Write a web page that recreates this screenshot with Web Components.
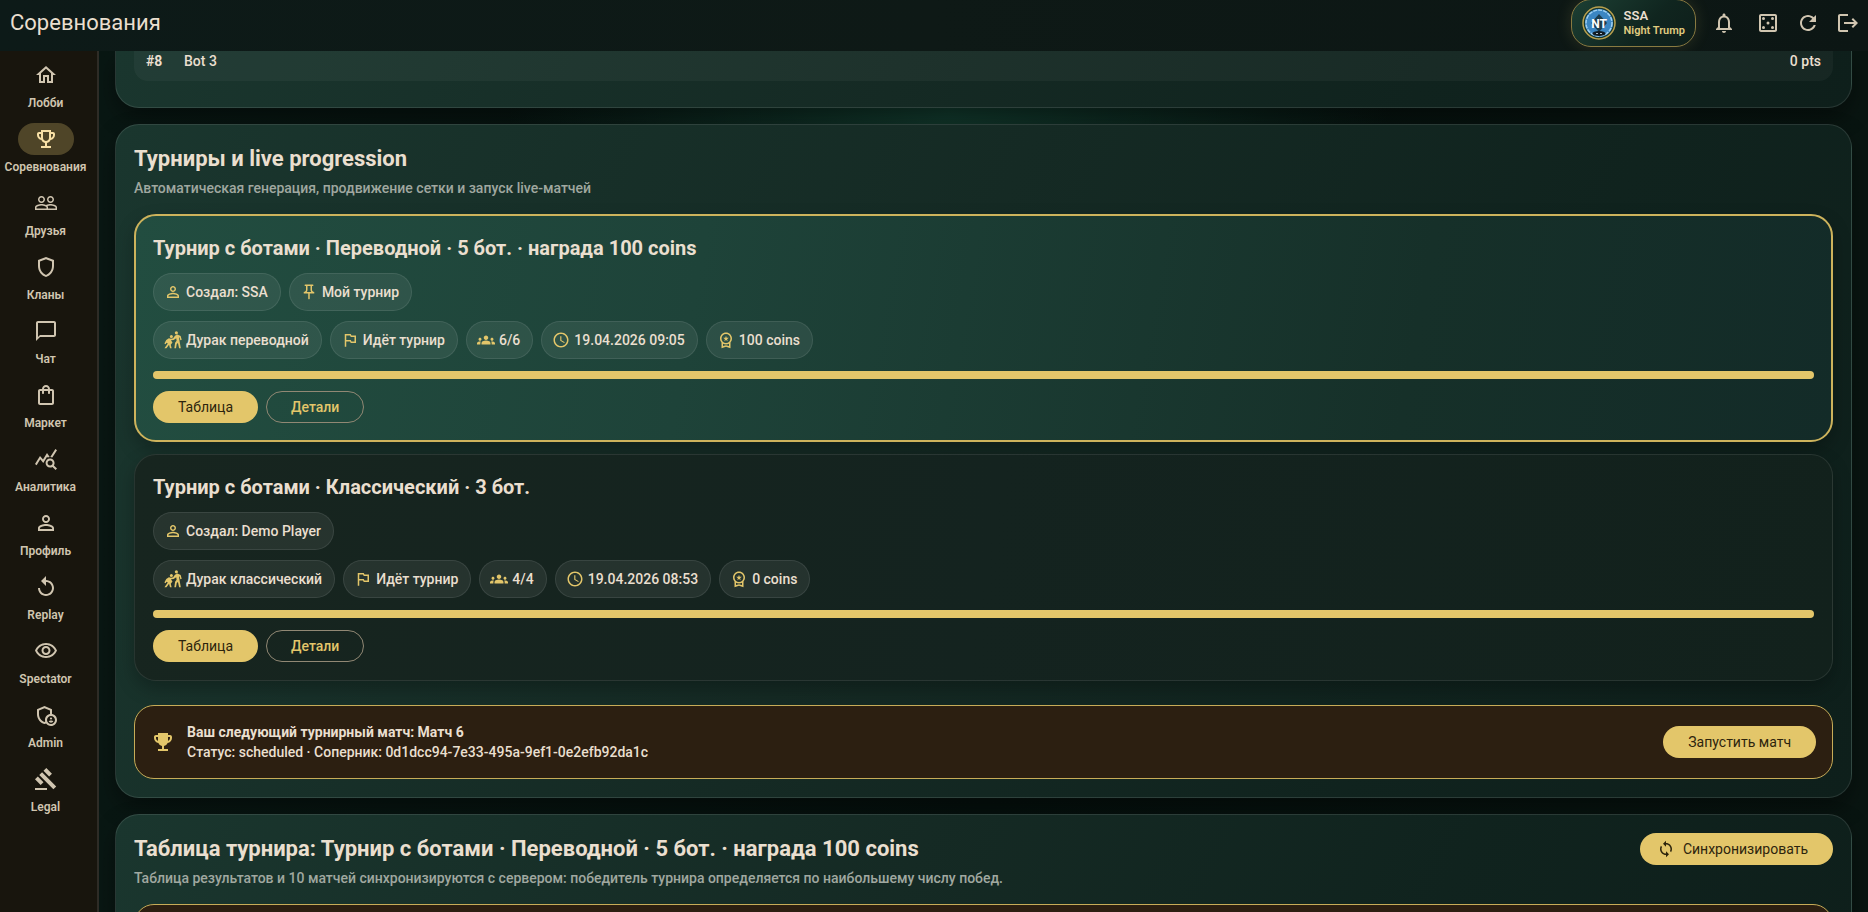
<!DOCTYPE html>
<html lang="ru">
<head>
<meta charset="utf-8">
<title>Соревнования</title>
<style>
	:root {
		--gold: #e3c66a;
		--cream: #eadfcf;
		--line: rgba(255, 255, 255, 0.11);
	}
	body {
		margin: 0;
		background: #07120f;
		color: var(--cream);
		font: 400 14px/20px Roboto, "Liberation Sans", sans-serif;
	}
</style>
</head>
<body>
<app-shell>
	<top-bar slot="bar" heading="Соревнования">
		<user-badge initials="NT" name="SSA" rank="Night Trump"></user-badge>
	</top-bar>
	<side-nav slot="nav">
		<nav-item icon="home">Лобби</nav-item>
		<nav-item icon="trophy" active>Соревнования</nav-item>
		<nav-item icon="people">Друзья</nav-item>
		<nav-item icon="shield">Кланы</nav-item>
		<nav-item icon="chat">Чат</nav-item>
		<nav-item icon="bag">Маркет</nav-item>
		<nav-item icon="stats">Аналитика</nav-item>
		<nav-item icon="person">Профиль</nav-item>
		<nav-item icon="replay">Replay</nav-item>
		<nav-item icon="eye">Spectator</nav-item>
		<nav-item icon="admin">Admin</nav-item>
		<nav-item icon="gavel">Legal</nav-item>
	</side-nav>

	<app-panel continued>
		<rank-row place="#8" player="Bot 3" points="0 pts"></rank-row>
	</app-panel>

	<app-panel heading="Турниры и live progression" note="Автоматическая генерация, продвижение сетки и запуск live-матчей">
		<tournament-card heading="Турнир с ботами · Переводной · 5 бот. · награда 100 coins" mine>
			<info-chip slot="owner" icon="person">Создал: SSA</info-chip>
			<info-chip slot="owner" icon="pin">Мой турнир</info-chip>
			<info-chip icon="kabaddi">Дурак переводной</info-chip>
			<info-chip icon="flag">Идёт турнир</info-chip>
			<info-chip icon="groups">6/6</info-chip>
			<info-chip icon="clock">19.04.2026 09:05</info-chip>
			<info-chip icon="award">100 coins</info-chip>
		</tournament-card>
		<tournament-card heading="Турнир с ботами · Классический · 3 бот.">
			<info-chip slot="owner" icon="person">Создал: Demo Player</info-chip>
			<info-chip icon="kabaddi">Дурак классический</info-chip>
			<info-chip icon="flag">Идёт турнир</info-chip>
			<info-chip icon="groups">4/4</info-chip>
			<info-chip icon="clock">19.04.2026 08:53</info-chip>
			<info-chip icon="award">0 coins</info-chip>
		</tournament-card>
		<match-banner spaced>
			<strong>Ваш следующий турнирный матч: Матч 6</strong>
			<span>Статус: scheduled · Соперник: 0d1dcc94-7e33-495a-9ef1-0e2efb92da1c</span>
			<pill-button slot="action">Запустить матч</pill-button>
		</match-banner>
	</app-panel>

	<app-panel heading="Таблица турнира: Турнир с ботами · Переводной · 5 бот. · награда 100 coins" note="Таблица результатов и 10 матчей синхронизируются с сервером: победитель турнира определяется по наибольшему числу побед.">
		<pill-button slot="action" icon="sync">Синхронизировать</pill-button>
		<match-banner bare></match-banner>
	</app-panel>
</app-shell>

<script>
// 24x24 icons
const ICONS = {
	home: '<path d="M12 5.69l5 4.5V18h-2v-6H9v6H7v-7.81l5-4.5M12 3L2 12h3v8h6v-6h2v6h6v-8h3L12 3z"/>',
	trophy: '<path d="M19 5h-2V3H7v2H5c-1.1 0-2 .9-2 2v1c0 2.55 1.92 4.63 4.39 4.94.63 1.5 1.98 2.63 3.61 2.96V19H7v2h10v-2h-4v-3.1c1.63-.33 2.98-1.46 3.61-2.96C19.08 12.63 21 10.55 21 8V7c0-1.1-.9-2-2-2zM5 8V7h2v3.82C5.84 10.4 5 9.3 5 8zm7 6c-1.65 0-3-1.35-3-3V5h6v6c0 1.65-1.35 3-3 3zm7-6c0 1.3-.84 2.4-2 2.82V7h2v1z"/>',
	trophyFull: '<path d="M19 5h-2V3H7v2H5c-1.1 0-2 .9-2 2v1c0 2.55 1.92 4.63 4.39 4.94.63 1.5 1.98 2.63 3.61 2.96V19H7v2h10v-2h-4v-3.1c1.63-.33 2.98-1.46 3.61-2.96C19.08 12.63 21 10.55 21 8V7c0-1.1-.9-2-2-2zM5 8V7h2v3.82C5.84 10.4 5 9.3 5 8zm14 0c0 1.3-.84 2.4-2 2.82V7h2v1z"/>',
	people: '<path d="M16.5 13c-1.2 0-3.07.34-4.5 1-1.43-.67-3.3-1-4.5-1C5.33 13 1 14.08 1 16.25V19h22v-2.75c0-2.17-4.33-3.25-6.5-3.25zm-4 4.5h-10v-1.25c0-.54 2.56-1.75 5-1.75s5 1.21 5 1.75v1.25zm9 0H14v-1.25c0-.46-.2-.86-.52-1.22.88-.3 1.96-.53 3.02-.53 2.44 0 5 1.21 5 1.75v1.25zM7.5 12c1.93 0 3.5-1.57 3.5-3.5S9.43 5 7.5 5 4 6.57 4 8.5 5.57 12 7.5 12zm0-5.5c1.1 0 2 .9 2 2s-.9 2-2 2-2-.9-2-2 .9-2 2-2zm9 5.5c1.93 0 3.5-1.57 3.5-3.5S18.43 5 16.5 5 13 6.57 13 8.5s1.57 3.5 3.5 3.5zm0-5.5c1.1 0 2 .9 2 2s-.9 2-2 2-2-.9-2-2 .9-2 2-2z"/>',
	shield: '<path d="M12 2L4 5v6.09c0 5.05 3.41 9.76 8 10.91 4.59-1.15 8-5.86 8-10.91V5l-8-3zm6 9.09c0 4-2.55 7.7-6 8.83-3.45-1.13-6-4.82-6-8.83v-4.7l6-2.25 6 2.25v4.7z"/>',
	chat: '<path d="M20 2H4c-1.1 0-2 .9-2 2v18l4-4h14c1.1 0 2-.9 2-2V4c0-1.1-.9-2-2-2zm0 14H6l-2 2V4h16v12z"/>',
	bag: '<path d="M18 6h-2c0-2.21-1.79-4-4-4S8 3.79 8 6H6c-1.1 0-2 .9-2 2v12c0 1.1.9 2 2 2h12c1.1 0 2-.9 2-2V8c0-1.1-.9-2-2-2zm-6-2c1.1 0 2 .9 2 2h-4c0-1.1.9-2 2-2zm6 16H6V8h2v2c0 .55.45 1 1 1s1-.45 1-1V8h4v2c0 .55.45 1 1 1s1-.45 1-1V8h2v12z"/>',
	stats: '<path d="M19.88 18.47c.44-.7.7-1.51.7-2.39 0-2.49-2.01-4.5-4.5-4.5s-4.5 2.01-4.5 4.5 2.01 4.5 4.49 4.5c.88 0 1.7-.26 2.39-.7L21.58 23 23 21.58l-3.12-3.11zm-3.8.11c-1.38 0-2.5-1.12-2.5-2.5s1.12-2.5 2.5-2.5 2.5 1.12 2.5 2.5-1.12 2.5-2.5 2.5zm-.36-8.5c-.74.02-1.45.18-2.1.45l-.55-.83-3.8 6.18-3.01-3.52-3.63 5.81L1 17l5-8 3 3.5L13 6l2.72 4.08zm2.59.5c-.64-.28-1.33-.45-2.05-.49L21.38 2 23 3.18l-4.69 7.4z"/>',
	person: '<path d="M12 5.9c1.16 0 2.1.94 2.1 2.1s-.94 2.1-2.1 2.1S9.9 9.16 9.9 8s.94-2.1 2.1-2.1m0 9c2.97 0 6.1 1.46 6.1 2.1v1.1H5.9V17c0-.64 3.13-2.1 6.1-2.1M12 4C9.79 4 8 5.79 8 8s1.79 4 4 4 4-1.79 4-4-1.79-4-4-4zm0 9c-2.67 0-8 1.34-8 4v3h16v-3c0-2.66-5.33-4-8-4z"/>',
	replay: '<path d="M12 5V1L7 6l5 5V7c3.31 0 6 2.69 6 6s-2.69 6-6 6-6-2.69-6-6H4c0 4.42 3.58 8 8 8s8-3.58 8-8-3.58-8-8-8z"/>',
	eye: '<path d="M12 6c3.79 0 7.17 2.13 8.82 5.5C19.17 14.87 15.79 17 12 17s-7.17-2.13-8.82-5.5C4.83 8.13 8.21 6 12 6m0-2C7 4 2.73 7.11 1 11.5 2.73 15.89 7 19 12 19s9.27-3.11 11-7.5C21.27 7.11 17 4 12 4zm0 5c1.38 0 2.5 1.12 2.5 2.5S13.38 14 12 14s-2.5-1.12-2.5-2.5S10.62 9 12 9m0-2c-2.48 0-4.5 2.02-4.5 4.5S9.52 16 12 16s4.5-2.02 4.5-4.5S14.48 7 12 7z"/>',
	admin: '<circle cx="17" cy="15.5" r="1.12"/><path d="M17 17.5c-.73 0-2.19.36-2.24 1.08.5.71 1.32 1.17 2.24 1.17s1.74-.46 2.24-1.17c-.05-.72-1.51-1.08-2.24-1.08z"/><path d="M18 11.09V6.27L10.5 3 3 6.27v4.91c0 4.54 3.2 8.79 7.5 9.82.55-.13 1.08-.32 1.6-.55C13.18 21.99 14.97 23 17 23c3.31 0 6-2.69 6-6 0-2.97-2.16-5.43-5-5.91zM11 17c0 .56.08 1.11.23 1.62-.24.11-.48.22-.73.3-3.17-1-5.5-4.24-5.5-7.74v-3.6l5.5-2.4 5.5 2.4v3.51c-2.84.48-5 2.94-5 5.91zm6 4c-2.21 0-4-1.79-4-4s1.79-4 4-4 4 1.79 4 4-1.79 4-4 4z"/>',
	gavel: '<path d="M1 21h12v2H1zM5.245 8.07l2.83-2.827 14.14 14.142-2.828 2.828zM12.317 1l5.657 5.656-2.83 2.83-5.654-5.66zM3.825 9.485l5.657 5.657-2.828 2.828-5.657-5.657z"/>',
	bell: '<path d="M12 22c1.1 0 2-.9 2-2h-4c0 1.1.89 2 2 2zm6-6v-5c0-3.07-1.64-5.64-4.5-6.32V4c0-.83-.67-1.5-1.5-1.5s-1.5.67-1.5 1.5v.68C7.63 5.36 6 7.92 6 11v5l-2 2v1h16v-1l-2-2zm-2 1H8v-6c0-2.48 1.51-4.5 4-4.5s4 2.02 4 4.5v6z"/>',
	dice: '<path d="M19 5v14H5V5h14m0-2H5c-1.1 0-2 .9-2 2v14c0 1.1.9 2 2 2h14c1.1 0 2-.9 2-2V5c0-1.1-.9-2-2-2z"/><circle cx="7.5" cy="7.5" r="1.5"/><circle cx="16.5" cy="7.5" r="1.5"/><circle cx="12" cy="12" r="1.5"/><circle cx="7.5" cy="16.5" r="1.5"/><circle cx="16.5" cy="16.5" r="1.5"/>',
	refresh: '<path d="M17.65 6.35C16.2 4.9 14.21 4 12 4c-4.42 0-7.99 3.58-7.99 8s3.57 8 7.99 8c3.73 0 6.84-2.55 7.73-6h-2.08c-.82 2.33-3.04 4-5.65 4-3.31 0-6-2.69-6-6s2.69-6 6-6c1.66 0 3.14.69 4.22 1.78L13 11h7V4l-2.35 2.35z"/>',
	logout: '<path d="M17 7l-1.41 1.41L18.17 11H8v2h10.17l-2.58 2.58L17 17l5-5zM4 5h8V3H4c-1.1 0-2 .9-2 2v14c0 1.1.9 2 2 2h8v-2H4V5z"/>',
	pin: '<path d="M14 4v5c0 1.12.37 2.16 1 3H9c.65-.86 1-1.9 1-3V4h4m3-2H7c-.55 0-1 .45-1 1s.45 1 1 1h1v5c0 1.66-1.34 3-3 3v2h5.97v7l1 1 1-1v-7H19v-2c-1.66 0-3-1.34-3-3V4h1c.55 0 1-.45 1-1s-.45-1-1-1z"/>',
	kabaddi: '<circle cx="16.5" cy="2.4" r="2.1"/><circle cx="9.8" cy="7.2" r="2"/><path d="M14.6 6.2l3.2-1.5 4.4 2 1.4 5-1.8.5-1-3.4-.8-.3.8 5.5 1.6 9h-2.3l-1.5-7-1.6 1.2-1 5.8h-2.2l1-7.5 2-2.5-.5-3.5-3.5 2.5-3.5.4 2 2.8-2.3 3 1.2 4.8H8l-1.3-4.8-3.4 4.8H.6l4.5-6.4-1.7-.8-1.3 2-1.6-1L3 12l3.5-2.4 2.8.7 2.9-.5z"/>',
	flag: '<path d="M14 6l-1-2H5v17h2v-7h5l1 2h7V6h-6zm4 8h-4l-1-2H7V6h5l1 2h5v6z"/>',
	groups: '<path d="M12 12.75c1.63 0 3.07.39 4.24.9 1.08.48 1.76 1.56 1.76 2.73V18H6v-1.61c0-1.18.68-2.26 1.76-2.73 1.17-.52 2.61-.91 4.24-.91zM4 13c1.1 0 2-.9 2-2s-.9-2-2-2-2 .9-2 2 .9 2 2 2zm1.13 1.1c-.37-.06-.74-.1-1.13-.1-.99 0-1.93.21-2.78.58C.48 14.9 0 15.62 0 16.43V18h4.5v-1.61c0-.83.23-1.61.63-2.29zM20 13c1.1 0 2-.9 2-2s-.9-2-2-2-2 .9-2 2 .9 2 2 2zm4 3.43c0-.81-.48-1.53-1.22-1.85-.85-.37-1.79-.58-2.78-.58-.39 0-.76.04-1.13.1.4.68.63 1.46.63 2.29V18H24v-1.57zM12 6c1.66 0 3 1.34 3 3s-1.34 3-3 3-3-1.34-3-3 1.34-3 3-3z"/>',
	clock: '<path d="M11.99 2C6.47 2 2 6.48 2 12s4.47 10 9.99 10C17.52 22 22 17.52 22 12S17.52 2 11.99 2zM12 20c-4.42 0-8-3.58-8-8s3.58-8 8-8 8 3.58 8 8-3.58 8-8 8zm.5-13H11v6l5.25 3.15.75-1.23-4.5-2.67z"/>',
	award: '<path d="M9.68 13.69L12 11.93l2.31 1.76-.88-2.85L15.75 9h-2.84L12 6.19 11.09 9H8.25l2.31 1.84-.88 2.85zM20 10c0-4.42-3.58-8-8-8s-8 3.58-8 8c0 2.03.76 3.87 2 5.28V23l6-2 6 2v-7.72c1.24-1.41 2-3.25 2-5.28zm-8-6c3.31 0 6 2.69 6 6s-2.69 6-6 6-6-2.69-6-6 2.69-6 6-6zm0 15l-4 1.02v-3.1c1.18.68 2.54 1.08 4 1.08s2.82-.4 4-1.08v3.1L12 19z"/>',
	sync: '<path d="M12 4V1L8 5l4 4V6c3.31 0 6 2.69 6 6 0 1.01-.25 1.97-.7 2.8l1.46 1.46C19.54 15.03 20 13.57 20 12c0-4.42-3.58-8-8-8zm0 14c-3.31 0-6-2.69-6-6 0-1.01.25-1.97.7-2.8L5.24 7.74C4.46 8.97 4 10.43 4 12c0 4.42 3.58 8 8 8v3l4-4-4-4v3z"/>'
};

// shared base: open shadow root filled from view()
class BaseElement extends HTMLElement {
	constructor () {
		super();
		this.attachShadow({ mode: 'open' });
	}
	connectedCallback () {
		this.shadowRoot.innerHTML = this.view();
	}
	attr (name) {
		return this.getAttribute(name) || '';
	}
}

class AppIcon extends BaseElement {
	view () {
		return `
			<style>
				:host { display: block; flex: none; width: 24px; height: 24px; }
				:host([small]) { width: 18px; height: 18px; }
				svg { display: block; width: 100%; height: 100%; fill: currentColor; }
			</style>
			<svg viewBox="0 0 24 24" aria-hidden="true">${ICONS[this.attr('name')]}</svg>
		`;
	}
}

class AppShell extends BaseElement {
	view () {
		return `
			<style>
				:host {
					display: grid;
					grid-template: auto minmax(0, 1fr) / auto minmax(0, 1fr);
					height: 100vh;
					overflow: hidden;
				}
				slot[name=bar] { display: block; grid-column: 1 / -1; }
				main {
					display: flex;
					flex-direction: column;
					gap: 16px;
					overflow: hidden;
					padding: 0 16px;
					background:
						radial-gradient(440px 340px at 48% 60px, #12382c, transparent),
						linear-gradient(90deg, #091713, #06110e 50%, #091511);
				}
			</style>
			<slot name="bar"></slot>
			<slot name="nav"></slot>
			<main><slot></slot></main>
		`;
	}
}

class TopBar extends BaseElement {
	view () {
		return `
			<style>
				header {
					display: flex;
					align-items: center;
					height: 51px;
					padding: 0 8px 5px 10px;
					box-sizing: border-box;
					background: linear-gradient(90deg, #0d1a18, #0e1916 50%, #0c1614);
				}
				h1 { flex: 1; margin: 0; font-size: 22px; font-weight: 400; line-height: 28px; }
				.tools { display: flex; gap: 16px; margin-left: 16px; }
				button { padding: 0; border: 0; background: none; color: #d0c5b0; cursor: pointer; }
				button:first-child { margin-right: 4px; }
			</style>
			<header>
				<h1>${this.attr('heading')}</h1>
				<slot></slot>
				<div class="tools">
					<button aria-label="Уведомления"><app-icon name="bell"></app-icon></button>
					<button aria-label="Кости"><app-icon name="dice"></app-icon></button>
					<button aria-label="Обновить"><app-icon name="refresh"></app-icon></button>
					<button aria-label="Выйти"><app-icon name="logout"></app-icon></button>
				</div>
			</header>
		`;
	}
}

class UserBadge extends BaseElement {
	view () {
		return `
			<style>
				:host {
					display: flex;
					align-items: center;
					gap: 8px;
					height: 46px;
					padding: 0 10px;
					border: 1px solid #897a41;
					border-radius: 20px;
					background: linear-gradient(135deg, #1c3f33, #10251f 60%, #0e1e1a);
					box-shadow: 0 0 16px rgba(227, 198, 106, 0.14);
				}
				svg { display: block; width: 34px; height: 34px; }
				text { font: 700 12px Roboto, sans-serif; fill: #fff; }
				div { display: flex; flex-direction: column; font-weight: 600; }
				b { font-size: 13px; font-weight: 600; line-height: 15px; }
				span { color: #e0cc80; font-size: 11px; line-height: 15px; }
			</style>
			<svg viewBox="0 0 34 34">
				<circle cx="17" cy="17" r="16" fill="#18372e" stroke="#b9a04e" stroke-width="1.5"/>
				<circle cx="17" cy="17" r="14" fill="#3b86c2"/>
				<circle cx="17" cy="17" r="13" fill="none" stroke="#9fd0f2" stroke-width="1.5" stroke-dasharray="4 1"/>
				<path d="M17 8l8 9-8 9-8-9z" fill="#1d3d4d"/>
				<ellipse cx="17" cy="27.500" rx="6.500" ry="2.500" fill="#101a22"/>
				<path d="M14 27.500h2m2 0h2" stroke="#a9bcc8"/>
				<text x="17" y="22" text-anchor="middle">${this.attr('initials')}</text>
			</svg>
			<div><b>${this.attr('name')}</b><span>${this.attr('rank')}</span></div>
		`;
	}
}

class SideNav extends BaseElement {
	view () {
		return `
			<style>
				nav {
					display: flex;
					flex-direction: column;
					gap: 13px;
					width: 91px;
					height: 100%;
					box-sizing: content-box;
					padding: 8px 6px 0 0;
					border-right: 2px solid #2e2c26;
					background: #18150d;
				}
			</style>
			<nav><slot></slot></nav>
		`;
	}
}

class NavItem extends BaseElement {
	view () {
		return `
			<style>
				a {
					display: flex;
					flex-direction: column;
					align-items: center;
					gap: 5px;
					color: #d0c5b0;
					font-size: 12px;
					font-weight: 600;
					line-height: 14px;
					text-decoration: none;
					white-space: nowrap;
				}
				.pill { padding: 4px 16px; border-radius: 16px; }
				:host([active]) .pill { background: #4f4528; color: #f8e0a6; }
			</style>
			<a href="#"><span class="pill"><app-icon name="${this.attr('icon')}"></app-icon></span><slot></slot></a>
		`;
	}
}

class AppPanel extends BaseElement {
	view () {
		const head = this.hasAttribute('heading') ? `
			<header>
				<h2>${this.attr('heading')}</h2>
				<slot name="action"></slot>
			</header>
			<p>${this.attr('note')}</p>
		` : '';
		return `
			<style>
				:host {
					display: block;
					flex: none;
					padding: 18px;
					border: 1px solid var(--line);
					border-radius: 24px;
					background: linear-gradient(115deg, #1a362e, #152a24 45%, #10231e 75%, #0e1f1b);
					box-shadow: 0 10px 22px rgba(0, 0, 0, 0.38);
				}
				:host([continued]) {
					padding: 0 18px 26px;
					border-top: 0;
					border-radius: 0 0 24px 24px;
				}
				header { display: flex; align-items: center; justify-content: space-between; }
				h2 { margin: 0; font-size: 22px; font-weight: 700; line-height: 32px; }
				p { margin: 3px 0 16px; color: #a0a8a0; font-weight: 500; }
			</style>
			${head}
			<slot></slot>
		`;
	}
}

class RankRow extends BaseElement {
	view () {
		return `
			<style>
				:host {
					display: grid;
					grid-template-columns: 38px 1fr auto;
					padding: 0 12px 10px;
					border-radius: 0 0 14px 14px;
					background: rgba(255, 255, 255, 0.04);
				}
				span { font-weight: 500; }
			</style>
			<b>${this.attr('place')}</b><span>${this.attr('player')}</span><span>${this.attr('points')}</span>
		`;
	}
}

class TournamentCard extends BaseElement {
	view () {
		return `
			<style>
				:host {
					display: block;
					margin-bottom: 12px;
					padding: 18px;
					border: 1px solid rgba(255, 255, 255, 0.09);
					border-radius: 22px;
					background: linear-gradient(100deg, #17251f, #14231f 50%, #12211c);
					box-shadow: 0 8px 18px rgba(0, 0, 0, 0.25);
				}
				:host([mine]) {
					padding: 18px 17px 17px;
					border: 2px solid #cdb35c;
					background: linear-gradient(100deg, #224d40, #1e4339 33%, #163029 75%, #132b28);
				}
				h3 { margin: 0 0 11px; font-size: 20px; font-weight: 700; line-height: 28px; }
				.row { display: flex; flex-wrap: wrap; gap: 8px; }
				.row + .row { margin-top: 10px; }
				progress {
					display: block;
					width: 100%;
					height: 8px;
					margin: 12px 0;
					appearance: none;
					border: 0;
				}
				progress::-webkit-progress-bar { border-radius: 4px; background: rgba(255, 255, 255, 0.1); }
				progress::-webkit-progress-value { border-radius: 4px; background: var(--gold); }
			</style>
			<h3>${this.attr('heading')}</h3>
			<div class="row"><slot name="owner"></slot></div>
			<div class="row"><slot></slot></div>
			<progress value="1" max="1" aria-label="Прогресс турнира"></progress>
			<div class="row">
				<pill-button>Таблица</pill-button>
				<pill-button outlined>Детали</pill-button>
			</div>
		`;
	}
}

class InfoChip extends BaseElement {
	view () {
		return `
			<style>
				:host {
					display: flex;
					align-items: center;
					gap: 4px;
					height: 36px;
					padding: 0 12px 0 10px;
					border: 1px solid rgba(255, 255, 255, 0.09);
					border-radius: 19px;
					background: rgba(255, 255, 255, 0.07);
					font-weight: 500;
				}
				app-icon { color: var(--gold); }
			</style>
			<app-icon small name="${this.attr('icon')}"></app-icon><slot></slot>
		`;
	}
}

class PillButton extends BaseElement {
	view () {
		const icon = this.attr('icon');
		return `
			<style>
				:host { display: block; flex: none; }
				button {
					display: flex;
					align-items: center;
					gap: 8px;
					height: 32px;
					padding: 0 25px;
					border: 0;
					border-radius: 16px;
					background: var(--gold);
					color: #2d240d;
					font: inherit;
					font-weight: 400;
					cursor: pointer;
				}
				:host([icon]) button { padding-left: 17px; }
				:host([outlined]) button {
					padding: 0 24px;
					border: 1px solid #918874;
					background: none;
					color: var(--gold);
					font-weight: 500;
				}
			</style>
			<button>${icon ? `<app-icon small name="${icon}"></app-icon>` : ''}<slot></slot></button>
		`;
	}
}

class MatchBanner extends BaseElement {
	view () {
		const body = this.hasAttribute('bare') ? '' : `
			<app-icon name="trophyFull"></app-icon>
			<div><slot></slot></div>
			<slot name="action"></slot>
		`;
		return `
			<style>
				:host {
					display: flex;
					align-items: center;
					gap: 12px;
					min-height: 40px;
					padding: 16px;
					border: 1px solid #c7ac58;
					border-radius: 20px;
					background: #2c1f11;
				}
				:host([spaced]) { margin-top: 24px; }
				div { display: flex; flex: 1; flex-direction: column; font-weight: 500; }
				app-icon { color: var(--gold); }
			</style>
			${body}
		`;
	}
}

customElements.define('app-icon', AppIcon);
customElements.define('app-shell', AppShell);
customElements.define('top-bar', TopBar);
customElements.define('user-badge', UserBadge);
customElements.define('side-nav', SideNav);
customElements.define('nav-item', NavItem);
customElements.define('app-panel', AppPanel);
customElements.define('rank-row', RankRow);
customElements.define('tournament-card', TournamentCard);
customElements.define('info-chip', InfoChip);
customElements.define('pill-button', PillButton);
customElements.define('match-banner', MatchBanner);
</script>
</body>
</html>
